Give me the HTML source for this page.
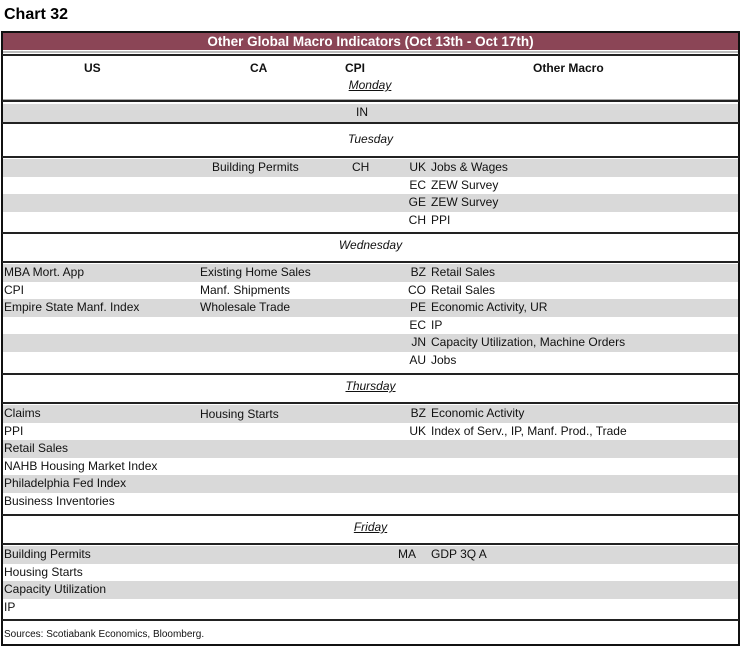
<!DOCTYPE html>
<html><head><meta charset="utf-8"><style>
body{margin:0;width:741px;height:647px;background:#fff;font-family:"Liberation Sans",sans-serif;position:relative;overflow:hidden;color:#111}
div{position:absolute;box-sizing:border-box}
.t{font-size:12px;line-height:17.5px;white-space:nowrap}
.g{background:#d9d9d9;left:3px;right:3px;height:17.5px}
.hl{left:2px;right:2px;height:2px;background:#222}
.c{font-style:italic;left:0;right:0;text-align:center}
.u{text-decoration:underline}
.code{width:30px;text-align:right}
</style></head><body>
<div class="t" style="left:4px;top:5px;font-size:16px;line-height:20px;font-weight:bold;color:#000">Chart 32</div>
<div style="left:1px;top:31px;width:739px;height:615px;border:2px solid #111"></div>
<div style="left:3px;top:33px;width:735px;height:17px;background:#8b4556;color:#fff;font-size:13.5px;line-height:17px;font-weight:bold;text-align:center">Other Global Macro Indicators (Oct 13th - Oct 17th)</div>
<div style="left:3px;right:3px;top:51px;height:2px;background:#bbb"></div>
<div class="hl" style="top:54px"></div>
<div class="t" style="left:84px;top:60px;font-weight:bold">US</div>
<div class="t" style="left:250px;top:60px;font-weight:bold">CA</div>
<div class="t" style="left:345px;top:60px;font-weight:bold">CPI</div>
<div class="t" style="left:533px;top:60px;font-weight:bold">Other Macro</div>
<div class="t c u" style="left:339px;right:auto;width:62px;top:77px">Monday</div>
<div style="left:3px;right:3px;top:99px;height:1px;background:#aaa"></div>
<div class="hl" style="top:100px"></div>
<div class="g" style="top:104px"></div>
<div class="t" style="left:356px;top:104px">IN</div>
<div class="hl" style="top:122px"></div>
<div class="t c" style="top:131px">Tuesday</div>
<div class="hl" style="top:156px"></div>
<div class="g" style="top:159px"></div><div class="g" style="top:194px"></div>
<div class="t" style="left:212px;top:159px">Building Permits</div>
<div class="t" style="left:352px;top:159px">CH</div>
<div class="t code" style="left:396px;top:159px">UK</div><div class="t" style="left:431px;top:159px">Jobs &amp; Wages</div>
<div class="t code" style="left:396px;top:176.5px">EC</div><div class="t" style="left:431px;top:176.5px">ZEW Survey</div>
<div class="t code" style="left:396px;top:194px">GE</div><div class="t" style="left:431px;top:194px">ZEW Survey</div>
<div class="t code" style="left:396px;top:211.5px">CH</div><div class="t" style="left:431px;top:211.5px">PPI</div>
<div class="hl" style="top:232px"></div>
<div class="t c" style="top:237px">Wednesday</div>
<div class="hl" style="top:261px"></div>
<div class="g" style="top:264px"></div><div class="g" style="top:299px"></div><div class="g" style="top:334px"></div>
<div class="t" style="left:4px;top:264px">MBA Mort. App</div>
<div class="t" style="left:4px;top:281.5px">CPI</div>
<div class="t" style="left:4px;top:299px">Empire State Manf. Index</div>
<div class="t" style="left:200px;top:264px">Existing Home Sales</div>
<div class="t" style="left:200px;top:281.5px">Manf. Shipments</div>
<div class="t" style="left:200px;top:299px">Wholesale Trade</div>
<div class="t code" style="left:396px;top:264px">BZ</div><div class="t" style="left:431px;top:264px">Retail Sales</div>
<div class="t code" style="left:396px;top:281.5px">CO</div><div class="t" style="left:431px;top:281.5px">Retail Sales</div>
<div class="t code" style="left:396px;top:299px">PE</div><div class="t" style="left:431px;top:299px">Economic Activity, UR</div>
<div class="t code" style="left:396px;top:316.5px">EC</div><div class="t" style="left:431px;top:316.5px">IP</div>
<div class="t code" style="left:396px;top:334px">JN</div><div class="t" style="left:431px;top:334px">Capacity Utilization, Machine Orders</div>
<div class="t code" style="left:396px;top:351.5px">AU</div><div class="t" style="left:431px;top:351.5px">Jobs</div>
<div class="hl" style="top:373px"></div>
<div class="t c" style="top:378px"><span class="u">Thursday</span></div>
<div class="hl" style="top:402px"></div>
<div class="g" style="top:405px"></div><div class="g" style="top:440px"></div><div class="g" style="top:475px"></div>
<div class="t" style="left:4px;top:405px">Claims</div>
<div class="t" style="left:4px;top:422.5px">PPI</div>
<div class="t" style="left:4px;top:440px">Retail Sales</div>
<div class="t" style="left:4px;top:457.5px">NAHB Housing Market Index</div>
<div class="t" style="left:4px;top:475px">Philadelphia Fed Index</div>
<div class="t" style="left:4px;top:492.5px">Business Inventories</div>
<div class="t" style="left:200px;top:406px">Housing Starts</div>
<div class="t code" style="left:396px;top:405px">BZ</div><div class="t" style="left:431px;top:405px">Economic Activity</div>
<div class="t code" style="left:396px;top:422.5px">UK</div><div class="t" style="left:431px;top:422.5px">Index of Serv., IP, Manf. Prod., Trade</div>
<div class="hl" style="top:514px"></div>
<div class="t c" style="top:519px"><span class="u">Friday</span></div>
<div class="hl" style="top:543px"></div>
<div class="g" style="top:546px"></div><div class="g" style="top:581px"></div>
<div class="t" style="left:4px;top:546px">Building Permits</div>
<div class="t" style="left:4px;top:563.5px">Housing Starts</div>
<div class="t" style="left:4px;top:581px">Capacity Utilization</div>
<div class="t" style="left:4px;top:598.5px">IP</div>
<div class="t" style="left:398px;top:546px">MA</div><div class="t" style="left:431px;top:546px">GDP 3Q A</div>
<div class="hl" style="top:619px"></div>
<div class="t" style="left:4px;top:626px;font-size:10px">Sources: Scotiabank Economics, Bloomberg.</div>
</body></html>
